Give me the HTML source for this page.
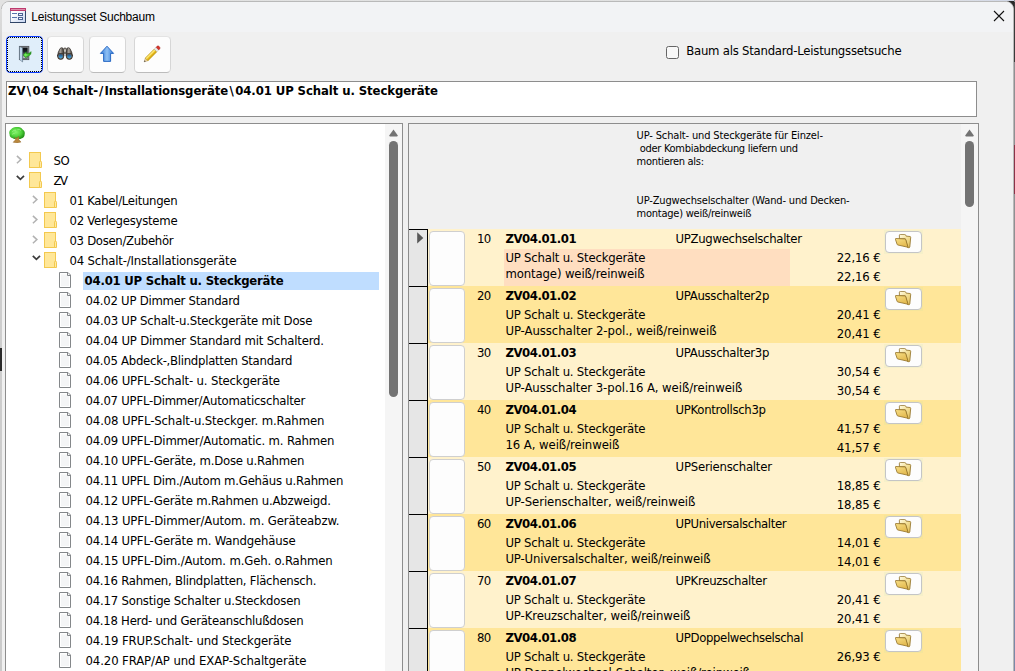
<!DOCTYPE html><html lang="de"><head><meta charset="utf-8"><title>Leistungsset Suchbaum</title><style>
*{box-sizing:border-box;margin:0;padding:0}
html,body{width:1015px;height:671px;overflow:hidden}
body{position:relative;background:#e2e2e2;font-family:"DejaVu Sans Condensed","Liberation Sans",sans-serif;font-size:13px;color:#000}
.ab{position:absolute}
.t{position:absolute;white-space:pre;display:block}
#win{position:absolute;left:1px;top:1px;width:1013px;height:690px;background:#f0f0f0;border:1px solid #b9b9b9;border-radius:8px 8px 0 0;overflow:hidden}
#tbar{position:absolute;left:2px;top:2px;width:1011px;height:30px;background:#f2f3f5;border-radius:7px 7px 0 0}
.btn{position:absolute;top:36px;width:37px;height:37px;background:#fdfdfd;border:1px solid #d6d6d6;border-top-color:#e3e3e3;border-bottom-color:#bcbcbc;border-radius:4.5px}
.box{position:absolute;background:#fff;border:1px solid #8d8d8d}
.sel{left:409px;width:19px;height:58px;background:#e6e6e6;border-top:1px solid #000;border-right:1px solid #000}
.wb{left:429px;width:36px;height:55px;background:#fdfdfd;border:1px solid #cfcfcf;border-radius:4px}
.fb{left:885px;width:37px;height:22px;background:#fdfdfd;border:1px solid #c4c5c6;border-radius:4px}
.thumb{position:absolute;width:9px;background:#737373;border-radius:4.5px}
</style></head><body>
<div class="ab" style="left:0;top:0;width:1015px;height:2px;background:linear-gradient(90deg,#e2e2e2 0,#e0e0e0 930px,#d6dbe8 990px,#cfd6e6 1015px)"></div>
<div class="ab" style="left:1007px;top:1px;width:8px;height:8px;background:#2b2b2b"></div>
<div class="ab" style="left:1014px;top:0;width:1px;height:671px;background:#8f8f92"></div>
<div class="ab" style="left:1014px;top:2px;width:1px;height:60px;background:#3a3a3a"></div>
<div class="ab" style="left:1014px;top:145px;width:1px;height:49px;background:#8c3348"></div>
<div class="ab" style="left:1014px;top:290px;width:1px;height:381px;background:#7b88a8"></div>
<div id="win"></div><div id="tbar"></div>
<div class="ab" style="left:0;top:9px;width:2px;height:662px;background:linear-gradient(180deg,#dcdcdc 0,#d0d0d0 60px,#cbcbcb 100%)"></div>
<div class="ab" style="left:0;top:348px;width:2px;height:23px;background:#2a2a2a"></div>
<svg width="0" height="0" style="position:absolute"><defs><linearGradient id="fbk" x1="0" y1="0" x2="1" y2="1"><stop offset="0" stop-color="#fffce6"/><stop offset="0.5" stop-color="#f3df95"/><stop offset="1" stop-color="#dfb94f"/></linearGradient><linearGradient id="ffr" x1="0" y1="0" x2="0.6" y2="1"><stop offset="0" stop-color="#f8df85"/><stop offset="1" stop-color="#e2b84e"/></linearGradient></defs></svg>
<svg class="ab" style="left:10px;top:8px" width="16" height="15" viewBox="0 0 16 15">
<defs><linearGradient id="g1" x1="0" y1="0" x2="1" y2="1"><stop offset="0.3" stop-color="#ffffff"/><stop offset="1" stop-color="#c3d2f0"/></linearGradient></defs>
<rect x="0" y="0" width="16" height="15" fill="url(#g1)"/>
<rect x="0" y="3" width="1" height="12" fill="#8496b3"/><rect x="15" y="3" width="1" height="12" fill="#33486b"/><rect x="0" y="14" width="16" height="1" fill="#2f4466"/>
<rect x="0" y="0" width="16" height="3" fill="#bd3a6e"/><rect x="1" y="1" width="14" height="1" fill="#df8cab"/>
<rect x="2" y="5" width="5" height="1" fill="#5674ad"/><rect x="2" y="9" width="5" height="1" fill="#5674ad"/>
<rect x="8.5" y="5.5" width="4" height="2" fill="#eef3fc" stroke="#4c6394"/><rect x="8.5" y="9.5" width="4" height="2" fill="#eef3fc" stroke="#4c6394"/>
</svg>
<svg class="ab" style="left:993px;top:10px" width="12" height="12" viewBox="0 0 12 12"><path d="M1 1L11 11M11 1L1 11" stroke="#111" stroke-width="1.1" fill="none"/></svg>
<svg class="ab" style="left:6px;top:36px" width="37" height="37" viewBox="0 0 37 37"><rect x="0.5" y="0.5" width="36" height="36" rx="3.5" fill="#e0eefa" stroke="#0b3bff"/><path d="M2 1.5H35M2 35.5H35M1.5 2V35M35.5 2V35" fill="none" stroke="#000" stroke-dasharray="1 1"/></svg>
<div class="btn" style="left:47px"></div><div class="btn" style="left:89px"></div><div class="btn" style="left:134px"></div>
<svg class="ab" style="left:18px;top:45px" width="14" height="18" viewBox="0 0 14 18">
<defs><linearGradient id="gd" x1="0" y1="0" x2="0" y2="1"><stop offset="0" stop-color="#05070b"/><stop offset="0.35" stop-color="#1b2028"/><stop offset="1" stop-color="#c9ced4"/></linearGradient>
<linearGradient id="gl" x1="0" y1="0" x2="1" y2="0"><stop offset="0" stop-color="#9db9d2"/><stop offset="0.5" stop-color="#d3e8f8"/><stop offset="1" stop-color="#86a5c2"/></linearGradient>
<radialGradient id="ga" cx="0.35" cy="0.5" r="0.6"><stop offset="0" stop-color="#8af070"/><stop offset="0.6" stop-color="#36c024"/><stop offset="1" stop-color="#1f8f14"/></radialGradient></defs>
<rect x="1.4" y="1.4" width="9.4" height="13.2" fill="#8f9499" stroke="#55585c" stroke-width="0.9"/>
<rect x="4.4" y="2.9" width="5" height="10.4" fill="url(#gd)" stroke="#3a3d41" stroke-width="0.5"/>
<path d="M1.5 1.5L4.6 3.1V17L1.5 14.6z" fill="url(#gl)" stroke="#5b6a78" stroke-width="0.5"/>
<path d="M5 10L8.3 6.8V8.7C10.4 8.8 12 8.2 13 6.6C13.6 9.6 11.6 11.4 8.3 11.4V13.2z" fill="url(#ga)" stroke="#238a18" stroke-width="0.5" stroke-linejoin="round"/>
</svg>
<svg class="ab" style="left:56px;top:46px" width="18" height="15" viewBox="0 0 18 15">
<defs><linearGradient id="gb" x1="0" y1="0" x2="1" y2="0"><stop offset="0" stop-color="#35302b"/><stop offset="0.42" stop-color="#aaa49d"/><stop offset="0.8" stop-color="#5a544d"/><stop offset="1" stop-color="#2f2a26"/></linearGradient>
<linearGradient id="gz" x1="0" y1="0" x2="0" y2="1"><stop offset="0" stop-color="#164a86"/><stop offset="1" stop-color="#4fb0de"/></linearGradient></defs>
<path d="M7.2 3Q9 0.4 10.8 3V7.6H7.2z" fill="#7d7871" stroke="#3f3a35" stroke-width="0.5"/>
<ellipse cx="9" cy="4.6" rx="1.1" ry="1.5" fill="#c4c0ba"/>
<path d="M4 2.6Q5.2 1.1 6.8 2L7.7 6.4L8 10H1.5L2.3 6.2z" fill="url(#gb)" stroke="#2e2a26" stroke-width="0.7"/>
<path d="M14 2.6Q12.8 1.1 11.2 2L10.3 6.4L10 10H16.5L15.7 6.2z" fill="url(#gb)" stroke="#2e2a26" stroke-width="0.7"/>
<circle cx="4.7" cy="10.3" r="3.35" fill="#2e2925"/><circle cx="13.3" cy="10.3" r="3.35" fill="#2e2925"/>
<circle cx="4.7" cy="10.3" r="2.75" fill="#675f57"/><circle cx="13.3" cy="10.3" r="2.75" fill="#675f57"/>
<circle cx="4.7" cy="10.3" r="2.1" fill="url(#gz)"/><circle cx="13.3" cy="10.3" r="2.1" fill="url(#gz)"/>
</svg>
<svg class="ab" style="left:99px;top:45px" width="16" height="18" viewBox="0 0 16 18">
<defs><linearGradient id="g3" x1="0" y1="0" x2="1" y2="0"><stop offset="0" stop-color="#2f78d6"/><stop offset="0.5" stop-color="#8fc0f4"/><stop offset="1" stop-color="#2f78d6"/></linearGradient></defs>
<path d="M8 1.2L14.6 8.4H11.6V16.4H4.6V8.4H1.4z" fill="url(#g3)" stroke="#1c5fc0" stroke-width="0.9" stroke-linejoin="round"/>
</svg>
<svg class="ab" style="left:143px;top:45px" width="18" height="18" viewBox="0 0 18 18">
<g transform="translate(1.1 16.9) rotate(-45)">
<path d="M0 0L3.6 -1.9V1.9z" fill="#ecd3a0" stroke="#a98c58" stroke-width="0.4"/>
<path d="M0 0L1.5 -0.8V0.8z" fill="#4a4a4a"/>
<rect x="3.6" y="-1.9" width="12.6" height="3.8" fill="#efc524" stroke="#a8860f" stroke-width="0.5"/>
<rect x="3.8" y="-1.5" width="12.2" height="1.3" fill="#fae57a"/>
<rect x="3.8" y="0.7" width="12.2" height="1" fill="#cfa314"/>
<rect x="16.2" y="-1.9" width="2.6" height="3.8" fill="#ececec" stroke="#a9a9a9" stroke-width="0.4"/>
<path d="M18.8 -1.9H20.2Q21.6 -1.9 21.6 0Q21.6 1.9 20.2 1.9H18.8z" fill="#d8352a" stroke="#9c2018" stroke-width="0.4"/>
</g></svg>
<div class="ab" style="left:666px;top:46px;width:13px;height:13px;background:#f8f8f8;border:1px solid #666;border-radius:2.5px"></div>
<div class="box" style="left:6px;top:81px;width:971px;height:36px"></div>
<div class="box" style="left:5px;top:123px;width:398px;height:560px"></div>
<div class="ab" style="left:385px;top:124px;width:17px;height:560px;background:#f5f5f5"></div>
<div class="ab" style="left:83px;top:272px;width:296px;height:18px;background:#bfddff"></div>
<svg class="ab" style="left:389px;top:128.5px" width="9" height="8" viewBox="0 0 9 8"><path d="M4.5 0.4L8.8 6.6Q9 7.4 8 7.4H1Q0 7.4 0.2 6.6z" fill="#737373"/></svg>
<div class="thumb" style="left:389px;top:141px;height:256px"></div>
<svg class="ab" style="left:9px;top:127px" width="16" height="16" viewBox="0 0 16 16">
<defs><radialGradient id="gt" cx="0.42" cy="0.42" r="0.6"><stop offset="0" stop-color="#86f36e"/><stop offset="0.6" stop-color="#4fd23b"/><stop offset="1" stop-color="#239317"/></radialGradient></defs>
<path d="M8 0C10.5 -0.2 12.6 0.8 13.6 2.4C15.4 3.4 16.2 5.4 15.6 7.4C15.8 9.4 14.2 11 12.4 11.4C11 12.4 9.6 12.2 8.6 11.6C7 12.4 5 12.2 3.8 11.2C1.8 10.8 0.4 9.2 0.6 7.4C-0.2 5.6 0.4 3.6 2 2.6C3.2 0.8 5.6 -0.2 8 0z" fill="url(#gt)"/>
<path d="M3.2 4.8Q4.8 2.6 7 3.2M8.4 2.4Q10.4 1.8 12 3.6M3 7.6Q4 6 5.6 6.6" stroke="#b4f7a0" stroke-width="0.7" fill="none" opacity="0.75"/>
<path d="M4.1 15.3L6.5 12.8L5.9 10.3L7.7 11.5L9.7 9.2L9.8 12.6L12 15.1L8.2 15.9z" fill="#b8873d" stroke="#8a6026" stroke-width="0.4" stroke-linejoin="round"/>
</svg>
<div class="box" style="left:408px;top:123px;width:571px;height:560px;background:#f0f0f0"></div>
<div class="ab" style="left:961px;top:124px;width:17px;height:560px;background:#f5f5f5"></div>
<svg class="ab" style="left:965px;top:128.5px" width="9" height="8" viewBox="0 0 9 8"><path d="M4.5 0.4L8.8 6.6Q9 7.4 8 7.4H1Q0 7.4 0.2 6.6z" fill="#737373"/></svg>
<div class="thumb" style="left:965px;top:141px;height:66px"></div>
<div class="ab" style="left:428px;top:229px;width:533px;height:57px;background:#fff2cc"></div>
<div class="ab" style="left:504px;top:249px;width:286px;height:37px;background:#ffdec0"></div>
<div class="ab sel" style="top:229px"></div>
<div class="ab wb" style="top:231px"></div>
<div class="ab" style="left:884px;top:230px;width:39px;height:24px;background:#f6f0c9"></div>
<div class="ab fb" style="top:231px"></div>
<div class="ab" style="left:428px;top:286px;width:533px;height:57px;background:#ffe699"></div>
<div class="ab sel" style="top:286px"></div>
<div class="ab wb" style="top:288px"></div>
<div class="ab" style="left:884px;top:287px;width:39px;height:24px;background:#f6e59a"></div>
<div class="ab fb" style="top:288px"></div>
<div class="ab" style="left:428px;top:343px;width:533px;height:57px;background:#fff2cc"></div>
<div class="ab sel" style="top:343px"></div>
<div class="ab wb" style="top:345px"></div>
<div class="ab" style="left:884px;top:344px;width:39px;height:24px;background:#f6f0c9"></div>
<div class="ab fb" style="top:345px"></div>
<div class="ab" style="left:428px;top:400px;width:533px;height:57px;background:#ffe699"></div>
<div class="ab sel" style="top:400px"></div>
<div class="ab wb" style="top:402px"></div>
<div class="ab" style="left:884px;top:401px;width:39px;height:24px;background:#f6e59a"></div>
<div class="ab fb" style="top:402px"></div>
<div class="ab" style="left:428px;top:457px;width:533px;height:57px;background:#fff2cc"></div>
<div class="ab sel" style="top:457px"></div>
<div class="ab wb" style="top:459px"></div>
<div class="ab" style="left:884px;top:458px;width:39px;height:24px;background:#f6f0c9"></div>
<div class="ab fb" style="top:459px"></div>
<div class="ab" style="left:428px;top:514px;width:533px;height:57px;background:#ffe699"></div>
<div class="ab sel" style="top:514px"></div>
<div class="ab wb" style="top:516px"></div>
<div class="ab" style="left:884px;top:515px;width:39px;height:24px;background:#f6e59a"></div>
<div class="ab fb" style="top:516px"></div>
<div class="ab" style="left:428px;top:571px;width:533px;height:57px;background:#fff2cc"></div>
<div class="ab sel" style="top:571px"></div>
<div class="ab wb" style="top:573px"></div>
<div class="ab" style="left:884px;top:572px;width:39px;height:24px;background:#f6f0c9"></div>
<div class="ab fb" style="top:573px"></div>
<div class="ab" style="left:428px;top:628px;width:533px;height:57px;background:#ffe699"></div>
<div class="ab sel" style="top:628px"></div>
<div class="ab wb" style="top:630px"></div>
<div class="ab" style="left:884px;top:629px;width:39px;height:24px;background:#f6e59a"></div>
<div class="ab fb" style="top:630px"></div>
<svg class="ab" style="left:417px;top:231.6px" width="7" height="12" viewBox="0 0 7 12"><path d="M0.2 0.2L6.3 5.9L0.2 11.6z" fill="#575757"/></svg>
<svg class="ab" style="left:29px;top:152px" width="14" height="16" viewBox="0 0 14 16"><rect x="0.5" y="0.5" width="11" height="15" fill="#ffe799" stroke="#f3c94f"/><path d="M10.5 15.5V10.2a1 1 0 0 1 2 0V15.5z" fill="#ffe9a3" stroke="#f3c94f"/></svg>
<svg class="ab" style="left:16px;top:155px" width="7" height="10" viewBox="0 0 7 10"><path d="M0.9 0.9L4.9 4.6L0.9 8.3" fill="none" stroke="#b2b2b2" stroke-width="1.5"/></svg>
<svg class="ab" style="left:29px;top:172px" width="14" height="16" viewBox="0 0 14 16"><rect x="0.5" y="0.5" width="11" height="15" fill="#ffe799" stroke="#f3c94f"/><path d="M10.5 15.5V10.2a1 1 0 0 1 2 0V15.5z" fill="#ffe9a3" stroke="#f3c94f"/></svg>
<svg class="ab" style="left:16px;top:175px" width="10" height="7" viewBox="0 0 10 7"><path d="M0.8 0.8L4.4 4.4L8 0.8" fill="none" stroke="#3c3c3c" stroke-width="1.7"/></svg>
<svg class="ab" style="left:44px;top:192px" width="14" height="16" viewBox="0 0 14 16"><rect x="0.5" y="0.5" width="11" height="15" fill="#ffe799" stroke="#f3c94f"/><path d="M10.5 15.5V10.2a1 1 0 0 1 2 0V15.5z" fill="#ffe9a3" stroke="#f3c94f"/></svg>
<svg class="ab" style="left:32px;top:195px" width="7" height="10" viewBox="0 0 7 10"><path d="M0.9 0.9L4.9 4.6L0.9 8.3" fill="none" stroke="#b2b2b2" stroke-width="1.5"/></svg>
<svg class="ab" style="left:44px;top:212px" width="14" height="16" viewBox="0 0 14 16"><rect x="0.5" y="0.5" width="11" height="15" fill="#ffe799" stroke="#f3c94f"/><path d="M10.5 15.5V10.2a1 1 0 0 1 2 0V15.5z" fill="#ffe9a3" stroke="#f3c94f"/></svg>
<svg class="ab" style="left:32px;top:215px" width="7" height="10" viewBox="0 0 7 10"><path d="M0.9 0.9L4.9 4.6L0.9 8.3" fill="none" stroke="#b2b2b2" stroke-width="1.5"/></svg>
<svg class="ab" style="left:44px;top:232px" width="14" height="16" viewBox="0 0 14 16"><rect x="0.5" y="0.5" width="11" height="15" fill="#ffe799" stroke="#f3c94f"/><path d="M10.5 15.5V10.2a1 1 0 0 1 2 0V15.5z" fill="#ffe9a3" stroke="#f3c94f"/></svg>
<svg class="ab" style="left:32px;top:235px" width="7" height="10" viewBox="0 0 7 10"><path d="M0.9 0.9L4.9 4.6L0.9 8.3" fill="none" stroke="#b2b2b2" stroke-width="1.5"/></svg>
<svg class="ab" style="left:44px;top:252px" width="14" height="16" viewBox="0 0 14 16"><rect x="0.5" y="0.5" width="11" height="15" fill="#ffe799" stroke="#f3c94f"/><path d="M10.5 15.5V10.2a1 1 0 0 1 2 0V15.5z" fill="#ffe9a3" stroke="#f3c94f"/></svg>
<svg class="ab" style="left:32px;top:255px" width="10" height="7" viewBox="0 0 10 7"><path d="M0.8 0.8L4.4 4.4L8 0.8" fill="none" stroke="#3c3c3c" stroke-width="1.7"/></svg>
<svg class="ab" style="left:59px;top:272px" width="12" height="16" viewBox="0 0 12 16"><path d="M0.5 0.5H9L11.5 3V15.5H0.5z" fill="#fff" stroke="#84878a"/><rect x="2" y="2.4" width="8" height="11.6" fill="#f4f5f6"/><path d="M8.5 0.5V3.5H11.5" fill="none" stroke="#84878a"/></svg>
<svg class="ab" style="left:59px;top:292px" width="12" height="16" viewBox="0 0 12 16"><path d="M0.5 0.5H9L11.5 3V15.5H0.5z" fill="#fff" stroke="#84878a"/><rect x="2" y="2.4" width="8" height="11.6" fill="#f4f5f6"/><path d="M8.5 0.5V3.5H11.5" fill="none" stroke="#84878a"/></svg>
<svg class="ab" style="left:59px;top:312px" width="12" height="16" viewBox="0 0 12 16"><path d="M0.5 0.5H9L11.5 3V15.5H0.5z" fill="#fff" stroke="#84878a"/><rect x="2" y="2.4" width="8" height="11.6" fill="#f4f5f6"/><path d="M8.5 0.5V3.5H11.5" fill="none" stroke="#84878a"/></svg>
<svg class="ab" style="left:59px;top:332px" width="12" height="16" viewBox="0 0 12 16"><path d="M0.5 0.5H9L11.5 3V15.5H0.5z" fill="#fff" stroke="#84878a"/><rect x="2" y="2.4" width="8" height="11.6" fill="#f4f5f6"/><path d="M8.5 0.5V3.5H11.5" fill="none" stroke="#84878a"/></svg>
<svg class="ab" style="left:59px;top:352px" width="12" height="16" viewBox="0 0 12 16"><path d="M0.5 0.5H9L11.5 3V15.5H0.5z" fill="#fff" stroke="#84878a"/><rect x="2" y="2.4" width="8" height="11.6" fill="#f4f5f6"/><path d="M8.5 0.5V3.5H11.5" fill="none" stroke="#84878a"/></svg>
<svg class="ab" style="left:59px;top:372px" width="12" height="16" viewBox="0 0 12 16"><path d="M0.5 0.5H9L11.5 3V15.5H0.5z" fill="#fff" stroke="#84878a"/><rect x="2" y="2.4" width="8" height="11.6" fill="#f4f5f6"/><path d="M8.5 0.5V3.5H11.5" fill="none" stroke="#84878a"/></svg>
<svg class="ab" style="left:59px;top:392px" width="12" height="16" viewBox="0 0 12 16"><path d="M0.5 0.5H9L11.5 3V15.5H0.5z" fill="#fff" stroke="#84878a"/><rect x="2" y="2.4" width="8" height="11.6" fill="#f4f5f6"/><path d="M8.5 0.5V3.5H11.5" fill="none" stroke="#84878a"/></svg>
<svg class="ab" style="left:59px;top:412px" width="12" height="16" viewBox="0 0 12 16"><path d="M0.5 0.5H9L11.5 3V15.5H0.5z" fill="#fff" stroke="#84878a"/><rect x="2" y="2.4" width="8" height="11.6" fill="#f4f5f6"/><path d="M8.5 0.5V3.5H11.5" fill="none" stroke="#84878a"/></svg>
<svg class="ab" style="left:59px;top:432px" width="12" height="16" viewBox="0 0 12 16"><path d="M0.5 0.5H9L11.5 3V15.5H0.5z" fill="#fff" stroke="#84878a"/><rect x="2" y="2.4" width="8" height="11.6" fill="#f4f5f6"/><path d="M8.5 0.5V3.5H11.5" fill="none" stroke="#84878a"/></svg>
<svg class="ab" style="left:59px;top:452px" width="12" height="16" viewBox="0 0 12 16"><path d="M0.5 0.5H9L11.5 3V15.5H0.5z" fill="#fff" stroke="#84878a"/><rect x="2" y="2.4" width="8" height="11.6" fill="#f4f5f6"/><path d="M8.5 0.5V3.5H11.5" fill="none" stroke="#84878a"/></svg>
<svg class="ab" style="left:59px;top:472px" width="12" height="16" viewBox="0 0 12 16"><path d="M0.5 0.5H9L11.5 3V15.5H0.5z" fill="#fff" stroke="#84878a"/><rect x="2" y="2.4" width="8" height="11.6" fill="#f4f5f6"/><path d="M8.5 0.5V3.5H11.5" fill="none" stroke="#84878a"/></svg>
<svg class="ab" style="left:59px;top:492px" width="12" height="16" viewBox="0 0 12 16"><path d="M0.5 0.5H9L11.5 3V15.5H0.5z" fill="#fff" stroke="#84878a"/><rect x="2" y="2.4" width="8" height="11.6" fill="#f4f5f6"/><path d="M8.5 0.5V3.5H11.5" fill="none" stroke="#84878a"/></svg>
<svg class="ab" style="left:59px;top:512px" width="12" height="16" viewBox="0 0 12 16"><path d="M0.5 0.5H9L11.5 3V15.5H0.5z" fill="#fff" stroke="#84878a"/><rect x="2" y="2.4" width="8" height="11.6" fill="#f4f5f6"/><path d="M8.5 0.5V3.5H11.5" fill="none" stroke="#84878a"/></svg>
<svg class="ab" style="left:59px;top:532px" width="12" height="16" viewBox="0 0 12 16"><path d="M0.5 0.5H9L11.5 3V15.5H0.5z" fill="#fff" stroke="#84878a"/><rect x="2" y="2.4" width="8" height="11.6" fill="#f4f5f6"/><path d="M8.5 0.5V3.5H11.5" fill="none" stroke="#84878a"/></svg>
<svg class="ab" style="left:59px;top:552px" width="12" height="16" viewBox="0 0 12 16"><path d="M0.5 0.5H9L11.5 3V15.5H0.5z" fill="#fff" stroke="#84878a"/><rect x="2" y="2.4" width="8" height="11.6" fill="#f4f5f6"/><path d="M8.5 0.5V3.5H11.5" fill="none" stroke="#84878a"/></svg>
<svg class="ab" style="left:59px;top:572px" width="12" height="16" viewBox="0 0 12 16"><path d="M0.5 0.5H9L11.5 3V15.5H0.5z" fill="#fff" stroke="#84878a"/><rect x="2" y="2.4" width="8" height="11.6" fill="#f4f5f6"/><path d="M8.5 0.5V3.5H11.5" fill="none" stroke="#84878a"/></svg>
<svg class="ab" style="left:59px;top:592px" width="12" height="16" viewBox="0 0 12 16"><path d="M0.5 0.5H9L11.5 3V15.5H0.5z" fill="#fff" stroke="#84878a"/><rect x="2" y="2.4" width="8" height="11.6" fill="#f4f5f6"/><path d="M8.5 0.5V3.5H11.5" fill="none" stroke="#84878a"/></svg>
<svg class="ab" style="left:59px;top:612px" width="12" height="16" viewBox="0 0 12 16"><path d="M0.5 0.5H9L11.5 3V15.5H0.5z" fill="#fff" stroke="#84878a"/><rect x="2" y="2.4" width="8" height="11.6" fill="#f4f5f6"/><path d="M8.5 0.5V3.5H11.5" fill="none" stroke="#84878a"/></svg>
<svg class="ab" style="left:59px;top:632px" width="12" height="16" viewBox="0 0 12 16"><path d="M0.5 0.5H9L11.5 3V15.5H0.5z" fill="#fff" stroke="#84878a"/><rect x="2" y="2.4" width="8" height="11.6" fill="#f4f5f6"/><path d="M8.5 0.5V3.5H11.5" fill="none" stroke="#84878a"/></svg>
<svg class="ab" style="left:59px;top:652px" width="12" height="16" viewBox="0 0 12 16"><path d="M0.5 0.5H9L11.5 3V15.5H0.5z" fill="#fff" stroke="#84878a"/><rect x="2" y="2.4" width="8" height="11.6" fill="#f4f5f6"/><path d="M8.5 0.5V3.5H11.5" fill="none" stroke="#84878a"/></svg>
<svg class="ab" style="left:895px;top:234px" width="17" height="15" viewBox="0 0 17 15"><path d="M4.4 4.8V1.2Q4.5 0.4 5.3 0.4H9.6Q10.4 0.4 10.7 1.2L11.1 2.1L15 2.5Q15.8 2.6 15.7 3.4L14.8 13Q14.6 13.9 13.6 13.7L12.6 13.4L10.4 4.8z" fill="url(#fbk)" stroke="#8f6f24" stroke-width="0.8" stroke-linejoin="round"/><path d="M0.9 4.5L9.8 4.9Q10.5 5 10.8 5.8L13.1 13.3L2.9 11Q2.2 10.8 2 10.1L0.4 5.2Q0.3 4.5 0.9 4.5z" fill="url(#ffr)" stroke="#8f6f24" stroke-width="0.8" stroke-linejoin="round"/></svg>
<svg class="ab" style="left:895px;top:291px" width="17" height="15" viewBox="0 0 17 15"><path d="M4.4 4.8V1.2Q4.5 0.4 5.3 0.4H9.6Q10.4 0.4 10.7 1.2L11.1 2.1L15 2.5Q15.8 2.6 15.7 3.4L14.8 13Q14.6 13.9 13.6 13.7L12.6 13.4L10.4 4.8z" fill="url(#fbk)" stroke="#8f6f24" stroke-width="0.8" stroke-linejoin="round"/><path d="M0.9 4.5L9.8 4.9Q10.5 5 10.8 5.8L13.1 13.3L2.9 11Q2.2 10.8 2 10.1L0.4 5.2Q0.3 4.5 0.9 4.5z" fill="url(#ffr)" stroke="#8f6f24" stroke-width="0.8" stroke-linejoin="round"/></svg>
<svg class="ab" style="left:895px;top:348px" width="17" height="15" viewBox="0 0 17 15"><path d="M4.4 4.8V1.2Q4.5 0.4 5.3 0.4H9.6Q10.4 0.4 10.7 1.2L11.1 2.1L15 2.5Q15.8 2.6 15.7 3.4L14.8 13Q14.6 13.9 13.6 13.7L12.6 13.4L10.4 4.8z" fill="url(#fbk)" stroke="#8f6f24" stroke-width="0.8" stroke-linejoin="round"/><path d="M0.9 4.5L9.8 4.9Q10.5 5 10.8 5.8L13.1 13.3L2.9 11Q2.2 10.8 2 10.1L0.4 5.2Q0.3 4.5 0.9 4.5z" fill="url(#ffr)" stroke="#8f6f24" stroke-width="0.8" stroke-linejoin="round"/></svg>
<svg class="ab" style="left:895px;top:405px" width="17" height="15" viewBox="0 0 17 15"><path d="M4.4 4.8V1.2Q4.5 0.4 5.3 0.4H9.6Q10.4 0.4 10.7 1.2L11.1 2.1L15 2.5Q15.8 2.6 15.7 3.4L14.8 13Q14.6 13.9 13.6 13.7L12.6 13.4L10.4 4.8z" fill="url(#fbk)" stroke="#8f6f24" stroke-width="0.8" stroke-linejoin="round"/><path d="M0.9 4.5L9.8 4.9Q10.5 5 10.8 5.8L13.1 13.3L2.9 11Q2.2 10.8 2 10.1L0.4 5.2Q0.3 4.5 0.9 4.5z" fill="url(#ffr)" stroke="#8f6f24" stroke-width="0.8" stroke-linejoin="round"/></svg>
<svg class="ab" style="left:895px;top:462px" width="17" height="15" viewBox="0 0 17 15"><path d="M4.4 4.8V1.2Q4.5 0.4 5.3 0.4H9.6Q10.4 0.4 10.7 1.2L11.1 2.1L15 2.5Q15.8 2.6 15.7 3.4L14.8 13Q14.6 13.9 13.6 13.7L12.6 13.4L10.4 4.8z" fill="url(#fbk)" stroke="#8f6f24" stroke-width="0.8" stroke-linejoin="round"/><path d="M0.9 4.5L9.8 4.9Q10.5 5 10.8 5.8L13.1 13.3L2.9 11Q2.2 10.8 2 10.1L0.4 5.2Q0.3 4.5 0.9 4.5z" fill="url(#ffr)" stroke="#8f6f24" stroke-width="0.8" stroke-linejoin="round"/></svg>
<svg class="ab" style="left:895px;top:519px" width="17" height="15" viewBox="0 0 17 15"><path d="M4.4 4.8V1.2Q4.5 0.4 5.3 0.4H9.6Q10.4 0.4 10.7 1.2L11.1 2.1L15 2.5Q15.8 2.6 15.7 3.4L14.8 13Q14.6 13.9 13.6 13.7L12.6 13.4L10.4 4.8z" fill="url(#fbk)" stroke="#8f6f24" stroke-width="0.8" stroke-linejoin="round"/><path d="M0.9 4.5L9.8 4.9Q10.5 5 10.8 5.8L13.1 13.3L2.9 11Q2.2 10.8 2 10.1L0.4 5.2Q0.3 4.5 0.9 4.5z" fill="url(#ffr)" stroke="#8f6f24" stroke-width="0.8" stroke-linejoin="round"/></svg>
<svg class="ab" style="left:895px;top:576px" width="17" height="15" viewBox="0 0 17 15"><path d="M4.4 4.8V1.2Q4.5 0.4 5.3 0.4H9.6Q10.4 0.4 10.7 1.2L11.1 2.1L15 2.5Q15.8 2.6 15.7 3.4L14.8 13Q14.6 13.9 13.6 13.7L12.6 13.4L10.4 4.8z" fill="url(#fbk)" stroke="#8f6f24" stroke-width="0.8" stroke-linejoin="round"/><path d="M0.9 4.5L9.8 4.9Q10.5 5 10.8 5.8L13.1 13.3L2.9 11Q2.2 10.8 2 10.1L0.4 5.2Q0.3 4.5 0.9 4.5z" fill="url(#ffr)" stroke="#8f6f24" stroke-width="0.8" stroke-linejoin="round"/></svg>
<svg class="ab" style="left:895px;top:633px" width="17" height="15" viewBox="0 0 17 15"><path d="M4.4 4.8V1.2Q4.5 0.4 5.3 0.4H9.6Q10.4 0.4 10.7 1.2L11.1 2.1L15 2.5Q15.8 2.6 15.7 3.4L14.8 13Q14.6 13.9 13.6 13.7L12.6 13.4L10.4 4.8z" fill="url(#fbk)" stroke="#8f6f24" stroke-width="0.8" stroke-linejoin="round"/><path d="M0.9 4.5L9.8 4.9Q10.5 5 10.8 5.8L13.1 13.3L2.9 11Q2.2 10.8 2 10.1L0.4 5.2Q0.3 4.5 0.9 4.5z" fill="url(#ffr)" stroke="#8f6f24" stroke-width="0.8" stroke-linejoin="round"/></svg>
<span class="t" style="top:8.84px;font-size:12px;line-height:16px;letter-spacing:-0.220px;font-family:'Liberation Sans',sans-serif;left:31.30px;">Leistungsset Suchbaum</span>
<span class="t" style="top:42.50px;font-size:13px;line-height:16px;letter-spacing:-0.236px;left:686.20px;">Baum als Standard-Leistungssetsuche</span>
<span class="t" style="top:82.50px;font-size:13px;line-height:16px;letter-spacing:-0.093px;font-weight:bold;left:8.00px;">ZV<span style="margin:0 1.5px">\</span>04 Schalt-<span style="margin:0 1.1px">/</span>Installationsgeräte<span style="margin:0 1.5px">\</span>04.01 UP Schalt u. Steckgeräte</span>
<span class="t" style="top:152.50px;font-size:13px;line-height:16px;letter-spacing:-0.241px;left:53.40px;">SO</span>
<span class="t" style="top:172.50px;font-size:13px;line-height:16px;letter-spacing:-1.416px;left:53.40px;">ZV</span>
<span class="t" style="top:192.50px;font-size:13px;line-height:16px;letter-spacing:-0.300px;left:69.50px;">01 Kabel/Leitungen</span>
<span class="t" style="top:212.50px;font-size:13px;line-height:16px;letter-spacing:-0.253px;left:69.50px;">02 Verlegesysteme</span>
<span class="t" style="top:232.50px;font-size:13px;line-height:16px;letter-spacing:-0.315px;left:69.50px;">03 Dosen/Zubehör</span>
<span class="t" style="top:252.50px;font-size:13px;line-height:16px;letter-spacing:-0.179px;left:69.50px;">04 Schalt-/Installationsgeräte</span>
<span class="t" style="top:272.50px;font-size:13px;line-height:16px;letter-spacing:-0.222px;font-weight:bold;left:84.60px;">04.01 UP Schalt u. Steckgeräte</span>
<span class="t" style="top:292.50px;font-size:13px;line-height:16px;letter-spacing:-0.260px;left:85.50px;">04.02 UP Dimmer Standard</span>
<span class="t" style="top:312.50px;font-size:13px;line-height:16px;letter-spacing:-0.220px;left:85.50px;">04.03 UP Schalt-u.Steckgeräte mit Dose</span>
<span class="t" style="top:332.50px;font-size:13px;line-height:16px;letter-spacing:-0.206px;left:85.50px;">04.04 UP Dimmer Standard mit Schalterd.</span>
<span class="t" style="top:352.50px;font-size:13px;line-height:16px;letter-spacing:-0.275px;left:85.50px;">04.05 Abdeck-,Blindplatten Standard</span>
<span class="t" style="top:372.50px;font-size:13px;line-height:16px;letter-spacing:-0.168px;left:85.50px;">04.06 UPFL-Schalt- u. Steckgeräte</span>
<span class="t" style="top:392.50px;font-size:13px;line-height:16px;letter-spacing:-0.237px;left:85.50px;">04.07 UPFL-Dimmer/Automaticschalter</span>
<span class="t" style="top:412.50px;font-size:13px;line-height:16px;letter-spacing:-0.118px;left:85.50px;">04.08 UPFL-Schalt-u.Steckger. m.Rahmen</span>
<span class="t" style="top:432.50px;font-size:13px;line-height:16px;letter-spacing:-0.183px;left:85.50px;">04.09 UPFL-Dimmer/Automatic. m. Rahmen</span>
<span class="t" style="top:452.50px;font-size:13px;line-height:16px;letter-spacing:-0.209px;left:85.50px;">04.10 UPFL-Geräte, m.Dose u.Rahmen</span>
<span class="t" style="top:472.50px;font-size:13px;line-height:16px;letter-spacing:-0.214px;left:85.50px;">04.11 UPFL Dim./Autom m.Gehäus u.Rahmen</span>
<span class="t" style="top:492.50px;font-size:13px;line-height:16px;letter-spacing:-0.196px;left:85.50px;">04.12 UPFL-Geräte m.Rahmen u.Abzweigd.</span>
<span class="t" style="top:512.50px;font-size:13px;line-height:16px;letter-spacing:-0.125px;left:85.50px;">04.13 UPFL-Dimmer/Autom. m. Geräteabzw.</span>
<span class="t" style="top:532.50px;font-size:13px;line-height:16px;letter-spacing:-0.181px;left:85.50px;">04.14 UPFL-Geräte m. Wandgehäuse</span>
<span class="t" style="top:552.50px;font-size:13px;line-height:16px;letter-spacing:-0.148px;left:85.50px;">04.15 UPFL-Dim./Autom. m.Geh. o.Rahmen</span>
<span class="t" style="top:572.50px;font-size:13px;line-height:16px;letter-spacing:-0.258px;left:85.50px;">04.16 Rahmen, Blindplatten, Flächensch.</span>
<span class="t" style="top:592.50px;font-size:13px;line-height:16px;letter-spacing:-0.205px;left:85.50px;">04.17 Sonstige Schalter u.Steckdosen</span>
<span class="t" style="top:612.50px;font-size:13px;line-height:16px;letter-spacing:-0.260px;left:85.50px;">04.18 Herd- und Geräteanschlußdosen</span>
<span class="t" style="top:632.50px;font-size:13px;line-height:16px;letter-spacing:-0.134px;left:85.50px;">04.19 FRUP.Schalt- und Steckgeräte</span>
<span class="t" style="top:652.50px;font-size:13px;line-height:16px;letter-spacing:-0.099px;left:85.50px;">04.20 FRAP/AP und EXAP-Schaltgeräte</span>
<span class="t" style="top:128.69px;font-size:11px;line-height:13px;letter-spacing:-0.146px;left:636.60px;">UP- Schalt- und Steckgeräte für Einzel-</span>
<span class="t" style="top:141.69px;font-size:11px;line-height:13px;letter-spacing:-0.297px;left:639.80px;">oder Kombiabdeckung liefern und</span>
<span class="t" style="top:154.69px;font-size:11px;line-height:13px;letter-spacing:-0.302px;left:636.60px;">montieren als:</span>
<span class="t" style="top:193.69px;font-size:11px;line-height:13px;letter-spacing:-0.162px;left:636.60px;">UP-Zugwechselschalter (Wand- und Decken-</span>
<span class="t" style="top:206.69px;font-size:11px;line-height:13px;letter-spacing:-0.243px;left:636.60px;">montage) weiß/reinweiß</span>
<span class="t" style="top:230.50px;font-size:13px;line-height:16px;letter-spacing:-0.491px;left:476.90px;">10</span>
<span class="t" style="top:230.50px;font-size:13px;line-height:16px;letter-spacing:-0.450px;font-weight:bold;left:505.40px;">ZV04.01.01</span>
<span class="t" style="top:230.50px;font-size:13px;line-height:16px;letter-spacing:-0.324px;left:675.60px;">UPZugwechselschalter</span>
<span class="t" style="top:249.50px;font-size:13px;line-height:16px;letter-spacing:-0.207px;left:505.40px;">UP Schalt u. Steckgeräte</span>
<span class="t" style="top:265.50px;font-size:13px;line-height:16px;letter-spacing:-0.120px;left:505.40px;">montage) weiß/reinweiß</span>
<span class="t" style="top:249.50px;font-size:13px;line-height:16px;letter-spacing:-0.121px;left:836.80px;">22,16 €</span>
<span class="t" style="top:268.50px;font-size:13px;line-height:16px;letter-spacing:-0.121px;left:836.80px;">22,16 €</span>
<span class="t" style="top:287.50px;font-size:13px;line-height:16px;letter-spacing:-0.491px;left:476.90px;">20</span>
<span class="t" style="top:287.50px;font-size:13px;line-height:16px;letter-spacing:-0.450px;font-weight:bold;left:505.40px;">ZV04.01.02</span>
<span class="t" style="top:287.50px;font-size:13px;line-height:16px;letter-spacing:-0.308px;left:675.60px;">UPAusschalter2p</span>
<span class="t" style="top:306.50px;font-size:13px;line-height:16px;letter-spacing:-0.207px;left:505.40px;">UP Schalt u. Steckgeräte</span>
<span class="t" style="top:322.50px;font-size:13px;line-height:16px;letter-spacing:-0.056px;left:505.40px;">UP-Ausschalter 2-pol., weiß/reinweiß</span>
<span class="t" style="top:306.50px;font-size:13px;line-height:16px;letter-spacing:-0.121px;left:836.80px;">20,41 €</span>
<span class="t" style="top:325.50px;font-size:13px;line-height:16px;letter-spacing:-0.121px;left:836.80px;">20,41 €</span>
<span class="t" style="top:344.50px;font-size:13px;line-height:16px;letter-spacing:-0.491px;left:476.90px;">30</span>
<span class="t" style="top:344.50px;font-size:13px;line-height:16px;letter-spacing:-0.450px;font-weight:bold;left:505.40px;">ZV04.01.03</span>
<span class="t" style="top:344.50px;font-size:13px;line-height:16px;letter-spacing:-0.308px;left:675.60px;">UPAusschalter3p</span>
<span class="t" style="top:363.50px;font-size:13px;line-height:16px;letter-spacing:-0.207px;left:505.40px;">UP Schalt u. Steckgeräte</span>
<span class="t" style="top:379.50px;font-size:13px;line-height:16px;letter-spacing:-0.071px;left:505.40px;">UP-Ausschalter 3-pol.16 A, weiß/reinweiß</span>
<span class="t" style="top:363.50px;font-size:13px;line-height:16px;letter-spacing:-0.121px;left:836.80px;">30,54 €</span>
<span class="t" style="top:382.50px;font-size:13px;line-height:16px;letter-spacing:-0.121px;left:836.80px;">30,54 €</span>
<span class="t" style="top:401.50px;font-size:13px;line-height:16px;letter-spacing:-0.491px;left:476.90px;">40</span>
<span class="t" style="top:401.50px;font-size:13px;line-height:16px;letter-spacing:-0.450px;font-weight:bold;left:505.40px;">ZV04.01.04</span>
<span class="t" style="top:401.50px;font-size:13px;line-height:16px;letter-spacing:-0.312px;left:675.60px;">UPKontrollsch3p</span>
<span class="t" style="top:420.50px;font-size:13px;line-height:16px;letter-spacing:-0.207px;left:505.40px;">UP Schalt u. Steckgeräte</span>
<span class="t" style="top:436.50px;font-size:13px;line-height:16px;letter-spacing:-0.062px;left:505.40px;">16 A, weiß/reinweiß</span>
<span class="t" style="top:420.50px;font-size:13px;line-height:16px;letter-spacing:-0.121px;left:836.80px;">41,57 €</span>
<span class="t" style="top:439.50px;font-size:13px;line-height:16px;letter-spacing:-0.121px;left:836.80px;">41,57 €</span>
<span class="t" style="top:458.50px;font-size:13px;line-height:16px;letter-spacing:-0.491px;left:476.90px;">50</span>
<span class="t" style="top:458.50px;font-size:13px;line-height:16px;letter-spacing:-0.450px;font-weight:bold;left:505.40px;">ZV04.01.05</span>
<span class="t" style="top:458.50px;font-size:13px;line-height:16px;letter-spacing:-0.231px;left:675.60px;">UPSerienschalter</span>
<span class="t" style="top:477.50px;font-size:13px;line-height:16px;letter-spacing:-0.207px;left:505.40px;">UP Schalt u. Steckgeräte</span>
<span class="t" style="top:493.50px;font-size:13px;line-height:16px;letter-spacing:-0.075px;left:505.40px;">UP-Serienschalter, weiß/reinweiß</span>
<span class="t" style="top:477.50px;font-size:13px;line-height:16px;letter-spacing:-0.121px;left:836.80px;">18,85 €</span>
<span class="t" style="top:496.50px;font-size:13px;line-height:16px;letter-spacing:-0.121px;left:836.80px;">18,85 €</span>
<span class="t" style="top:515.50px;font-size:13px;line-height:16px;letter-spacing:-0.491px;left:476.90px;">60</span>
<span class="t" style="top:515.50px;font-size:13px;line-height:16px;letter-spacing:-0.450px;font-weight:bold;left:505.40px;">ZV04.01.06</span>
<span class="t" style="top:515.50px;font-size:13px;line-height:16px;letter-spacing:-0.345px;left:675.60px;">UPUniversalschalter</span>
<span class="t" style="top:534.50px;font-size:13px;line-height:16px;letter-spacing:-0.207px;left:505.40px;">UP Schalt u. Steckgeräte</span>
<span class="t" style="top:550.50px;font-size:13px;line-height:16px;letter-spacing:-0.132px;left:505.40px;">UP-Universalschalter, weiß/reinweiß</span>
<span class="t" style="top:534.50px;font-size:13px;line-height:16px;letter-spacing:-0.121px;left:836.80px;">14,01 €</span>
<span class="t" style="top:553.50px;font-size:13px;line-height:16px;letter-spacing:-0.121px;left:836.80px;">14,01 €</span>
<span class="t" style="top:572.50px;font-size:13px;line-height:16px;letter-spacing:-0.491px;left:476.90px;">70</span>
<span class="t" style="top:572.50px;font-size:13px;line-height:16px;letter-spacing:-0.450px;font-weight:bold;left:505.40px;">ZV04.01.07</span>
<span class="t" style="top:572.50px;font-size:13px;line-height:16px;letter-spacing:-0.293px;left:675.60px;">UPKreuzschalter</span>
<span class="t" style="top:591.50px;font-size:13px;line-height:16px;letter-spacing:-0.207px;left:505.40px;">UP Schalt u. Steckgeräte</span>
<span class="t" style="top:607.50px;font-size:13px;line-height:16px;letter-spacing:-0.098px;left:505.40px;">UP-Kreuzschalter, weiß/reinweiß</span>
<span class="t" style="top:591.50px;font-size:13px;line-height:16px;letter-spacing:-0.121px;left:836.80px;">20,41 €</span>
<span class="t" style="top:610.50px;font-size:13px;line-height:16px;letter-spacing:-0.121px;left:836.80px;">20,41 €</span>
<span class="t" style="top:629.50px;font-size:13px;line-height:16px;letter-spacing:-0.491px;left:476.90px;">80</span>
<span class="t" style="top:629.50px;font-size:13px;line-height:16px;letter-spacing:-0.450px;font-weight:bold;left:505.40px;">ZV04.01.08</span>
<span class="t" style="top:629.50px;font-size:13px;line-height:16px;letter-spacing:-0.358px;left:675.60px;">UPDoppelwechselschal</span>
<span class="t" style="top:648.50px;font-size:13px;line-height:16px;letter-spacing:-0.207px;left:505.40px;">UP Schalt u. Steckgeräte</span>
<span class="t" style="top:664.50px;font-size:13px;line-height:16px;letter-spacing:-0.118px;left:505.40px;">UP-Doppelwechsel-Schalter, weiß/reinweiß</span>
<span class="t" style="top:648.50px;font-size:13px;line-height:16px;letter-spacing:-0.121px;left:836.80px;">26,93 €</span>
<span class="t" style="top:667.50px;font-size:13px;line-height:16px;letter-spacing:-0.121px;left:836.80px;">26,93 €</span>
</body></html>
